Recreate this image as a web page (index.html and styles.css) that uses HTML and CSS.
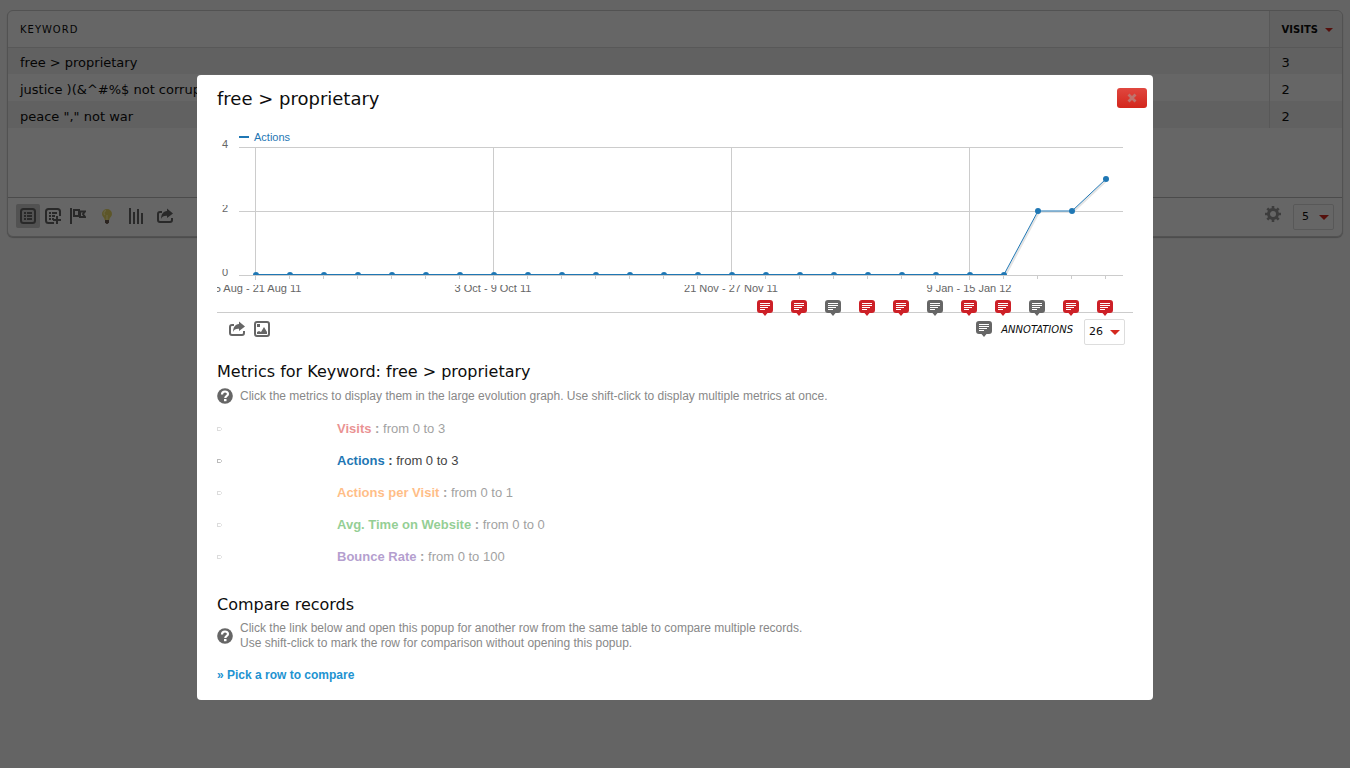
FILE: index.html
```
<!DOCTYPE html>
<html lang="en">
<head>
<meta charset="utf-8">
<title>Row evolution</title>
<link rel="stylesheet" href="styles.css">
</head>
<body>
<svg class="defs" aria-hidden="true">
  <symbol id="i-table" viewBox="0 0 16 16"><rect x="1" y="1" width="14" height="14" rx="2.500" fill="none" stroke="currentColor" stroke-width="2"/><path d="M4 4h2v2H4zM4 7h2v2H4zM4 10h2v2H4zM7 4h5v2H7zM7 7h5v2H7zM7 10h5v2H7z" fill="currentColor"/></symbol>
  <symbol id="i-tableplus" viewBox="0 0 16 16"><path d="M15 8V3.500Q15 1 12.500 1h-9Q1 1 1 3.500v9Q1 15 3.500 15H9" fill="none" stroke="currentColor" stroke-width="2"/><path d="M4 4h2v2H4zM4 7h2v2H4zM4 10h2v2H4zM7 4h5v2H7zM7 7h3v2H7zM7 10h2v2H7zM11 8h2v3h3v2h-3v3h-2v-3H8v-2h3z" fill="currentColor"/></symbol>
  <symbol id="i-flag" viewBox="0 0 16 16"><path d="M1 0v16M4 8V2h5v6zM9 3.500h6L13 6l2 3h-5V4" fill="none" stroke="currentColor" stroke-width="2"/></symbol>
  <symbol id="i-bulb" viewBox="0 0 16 16"><path d="M8 1a5 5 0 0 0-5 5c0 2.500 2.500 3.500 2.700 6h4.600c.2-2.500 2.700-3.500 2.700-6a5 5 0 0 0-5-5z" fill="#e8d868"/><path d="M7 2.500C4.500 3 4.500 6 6 7M8 7v5" stroke="#fff6a0" stroke-width="1.300" fill="none"/><path d="M6 12h4v2.500L8.500 16h-1L6 14.500z" fill="#6b5a50"/></symbol>
  <symbol id="i-bars" viewBox="0 0 16 16"><path d="M2 0v16M6 4v12M10 1v15M14 5v11" fill="none" stroke="currentColor" stroke-width="2"/></symbol>
  <symbol id="i-share" viewBox="0 0 16 16"><path d="M5 4H3Q1 4 1 6v6Q1 14 3 14h10q2 0 2-2v-2" fill="none" stroke="currentColor" stroke-width="2"/><path d="M10 0.500 16 5.500 10 10V7.700C7 7.500 5 8.500 4 11c0-4.500 2-7.500 6-8z" fill="currentColor"/></symbol>
  <symbol id="i-image" viewBox="0 0 16 16"><rect x="1" y="1" width="14" height="14" rx="2" fill="none" stroke="currentColor" stroke-width="2"/><path d="M3 13v-2l2-1 2 1 3-5 3 5v2zM3 3h3v3H3z" fill="currentColor"/></symbol>
  <symbol id="i-gear" viewBox="0 0 16 16"><circle cx="8" cy="8" r="4.500" fill="none" stroke="currentColor" stroke-width="3"/><path d="M8 0v3M8 13v3M0 8h3M13 8h3M2.300 2.300l2.200 2.200M11.500 11.500l2.200 2.200M2.300 13.700l2.200-2.200M11.500 4.500l2.200-2.200" stroke="currentColor" stroke-width="2.600"/></symbol>
  <symbol id="i-note" viewBox="0 0 16 16"><path d="M3 0h10q3 0 3 3v7q0 3-3 3h-2.500L8 16l-2.500-3H3q-3 0-3-3V3q0-3 3-3z" fill="currentColor"/><path d="M3 3.500h10M3 5.500h10M3 7.500h8M3 9.500h5" stroke="#fff"/></symbol>
  <symbol id="i-help" viewBox="0 0 16 16"><circle cx="8" cy="8" r="7.800" fill="currentColor"/><path d="M5 6.500c0-4 6-3.800 6-.5 0 2-2.700 1.700-2.700 4" fill="none" stroke="#fff" stroke-width="2.200"/><path d="M7 11h2.500v2.200H7z" fill="#fff"/></symbol>
  <symbol id="i-bullet" viewBox="0 0 5 6"><path d="M0 1.500h3.500l1 1v1l-1 1H0M.5 1v4" fill="none" stroke="#bbb"/></symbol>
</svg>

<main class="widget">
  <table class="records">
    <thead><tr><th>KEYWORD</th><th class="sorted">VISITS <span class="caret"></span></th></tr></thead>
    <tbody>
      <tr><td>free &gt; proprietary</td><td>3</td></tr>
      <tr><td>justice )(&amp;^#%$ not corruption</td><td>2</td></tr>
      <tr><td>peace "," not war</td><td>2</td></tr>
    </tbody>
  </table>
  <footer class="toolbar">
    <button class="tool active" aria-label="Table"><svg><use href="#i-table"/></svg></button>
    <button class="tool" aria-label="Table with more metrics"><svg><use href="#i-tableplus"/></svg></button>
    <button class="tool" aria-label="Goals"><svg><use href="#i-flag"/></svg></button>
    <button class="tool wide" aria-label="Insights"><svg><use href="#i-bulb"/></svg></button>
    <button class="tool" aria-label="Bar graph"><svg><use href="#i-bars"/></svg></button>
    <button class="tool wide" aria-label="Export"><svg><use href="#i-share"/></svg></button>
    <button class="tool settings" aria-label="Settings"><svg><use href="#i-gear"/></svg></button>
    <label class="picker"><select aria-label="Rows"><option>5</option><option>10</option></select><span class="caret"></span></label>
  </footer>
</main>

<div class="overlay">
  <section class="dialog" role="dialog" aria-labelledby="dialog-title">
    <header class="dialog-head">
      <h1 id="dialog-title">free &gt; proprietary</h1>
      <button class="close" aria-label="Close"><svg viewBox="0 0 10 10"><path d="M1.500 1.500l7 7M8.500 1.500l-7 7" stroke="#bf746e" stroke-width="2.800"/></svg></button>
    </header>

    <svg class="chart" viewBox="0 0 916 192" role="img" aria-label="Evolution of actions">
      <defs>
        <clipPath id="c-x"><rect x="0" y="161" width="916" height="14"/></clipPath>
        <clipPath id="c-y"><rect x="0" y="0" width="20" height="24"/><rect x="0" y="81" width="20" height="12"/><rect x="0" y="145" width="20" height="12"/></clipPath>
        <clipPath id="c-p"><rect x="22" y="20" width="894" height="131"/></clipPath>
      </defs>
      <path class="grid" d="M22 23.500h884M22 87.500h884M22 151.500h884M38.500 23v133M276.500 23v133M514.500 23v133M752.500 23v133"/>
      <path class="grid" id="ticks"/>
      <path class="grid" d="M0 188.500h916"/>
      <path d="M22 13h10" stroke="#1f77b4" stroke-width="2"/>
      <text class="legend" x="37" y="17">Actions</text>
      <g class="axis" clip-path="url(#c-y)"><text x="5" y="24">4</text><text x="5" y="88">2</text><text x="5" y="152">0</text></g>
      <g class="axis mid" clip-path="url(#c-x)"><text x="38" y="168">15 Aug - 21 Aug 11</text><text x="276" y="168">3 Oct - 9 Oct 11</text><text x="514" y="168">21 Nov - 27 Nov 11</text><text x="752" y="168">9 Jan - 15 Jan 12</text></g>
      <g clip-path="url(#c-p)">
        <path class="shade" d="M788 152l34-64h34l34-32"/>
        <path class="line" d="M39 150.500H787L821 87H855L889 55"/>
        <g id="points" fill="#1f77b4"></g>
      </g>
      <g id="notes"></g>
    </svg>

    <div class="chart-foot">
      <button class="tool" aria-label="Export"><svg><use href="#i-share"/></svg></button>
      <button class="tool" aria-label="Export as image"><svg><use href="#i-image"/></svg></button>
      <a class="annotations" href="#"><svg><use href="#i-note"/></svg>ANNOTATIONS</a>
      <label class="picker periods"><select aria-label="Periods"><option>26</option><option>52</option></select><span class="caret"></span></label>
    </div>

    <h2>Metrics for Keyword: free &gt; proprietary</h2>
    <p class="help"><svg><use href="#i-help"/></svg><span>Click the metrics to display them in the large evolution graph. Use shift-click to display multiple metrics at once.</span></p>
    <ul class="metrics">
      <li><svg><use href="#i-bullet"/></svg><span><b class="visits">Visits</b><b> : </b>from 0 to 3</span></li>
      <li class="current"><svg><use href="#i-bullet"/></svg><span><b class="actions">Actions</b><b> : </b>from 0 to 3</span></li>
      <li><svg><use href="#i-bullet"/></svg><span><b class="per-visit">Actions per Visit</b><b> : </b>from 0 to 1</span></li>
      <li><svg><use href="#i-bullet"/></svg><span><b class="time">Avg. Time on Website</b><b> : </b>from 0 to 0</span></li>
      <li><svg><use href="#i-bullet"/></svg><span><b class="bounce">Bounce Rate</b><b> : </b>from 0 to 100</span></li>
    </ul>

    <h2>Compare records</h2>
    <p class="help"><svg><use href="#i-help"/></svg><span>Click the link below and open this popup for another row from the same table to compare multiple records.<br>Use shift-click to mark the row for comparison without opening this popup.</span></p>
    <a class="pick" href="#">» Pick a row to compare</a>
  </section>
</div>
<script src="chart.js"></script>
</body>
</html>
```
FILE: styles.css
```
* { box-sizing: border-box; }
body { margin: 0; min-height: 100vh; padding: 10px 7px; background: #fafafa; font-family: "DejaVu Sans", Verdana, sans-serif; color: #0d0d0d; }
button { border: 0; padding: 0; background: none; color: inherit; font: inherit; }
h1, h2, p, ul { margin: 0; padding: 0; }
.defs { display: none; }

.widget { border: 1px solid #ccc; border-radius: 6px; background: #fff; box-shadow: 0 1px 1px #bbb; }
.records { width: 100%; border-collapse: collapse; margin-bottom: 69px; }
.records th { height: 36px; padding: 2px 12px 0; text-align: left; font-size: 10px; font-weight: 400; letter-spacing: 1px; border-bottom: 1px solid #ddd; white-space: nowrap; }
.records .sorted { width: 73px; padding-right: 8px; font-weight: 700; letter-spacing: 0; background: #f2f2f2; border-radius: 0 6px 0 0; }
.records .caret { margin-left: 4px; }
.records td { height: 27px; padding: 3px 12px 0; font-size: 13px; }
.records td + td, .records th + th { border-left: 1px solid #ddd; }
.records tbody tr:nth-child(odd) { background: #f2f2f2; }

.toolbar { display: flex; align-items: flex-start; gap: 1px; height: 39px; padding: 6px 8px; border-top: 1px solid #bbb; }
.tool { width: 24px; height: 24px; display: grid; place-items: center; color: #666; }
.tool svg { width: 16px; height: 16px; }
.tool.active { background: #ccc; border-radius: 2px; }
.tool.wide { width: 32px; }
.settings { margin-left: auto; margin-right: 7px; height: 20px; color: #999; }
.caret { display: inline-block; border: 4px solid transparent; border-top-color: #d4291f; border-bottom: 0; vertical-align: middle; }
.picker { display: flex; align-items: center; position: relative; border: 1px solid #ddd; border-radius: 2px; width: 41px; height: 26px; }
.picker select { appearance: none; width: 100%; height: 100%; border: 0; background: none; padding: 0 0 2px 8px; font: 11px "DejaVu Sans", sans-serif; color: #0d0d0d; }
.picker.periods select { padding-left: 4px; }
.picker .caret { position: absolute; right: 4px; border-width: 5px 5px 0; pointer-events: none; }

.overlay { position: fixed; inset: 0; padding: 75px 20px 20px; overflow: auto; background: rgba(0, 0, 0, .6); }
.dialog { max-width: 956px; margin: 0 auto; padding: 12px 20px 17px; border-radius: 4px; background: #fff; font-size: 12px; }
.dialog-head { display: flex; justify-content: space-between; align-items: flex-start; height: 37px; margin-right: -14px; }
.dialog-head h1 { font-size: 18px; line-height: 24px; font-weight: 400; }
.close { width: 30px; height: 20px; margin-top: 1px; border-radius: 3px; background: linear-gradient(#e0473f, #d3261c); display: grid; place-items: center; }
.close svg { width: 10px; height: 10px; }

.chart { display: block; width: 100%; overflow: visible; }
.grid { stroke: #ccc; fill: none; }
.line { stroke: #1f77b4; fill: none; }
.shade { stroke: #e4e4e4; stroke-width: 2; fill: none; }
.legend { font: 11px "Liberation Sans", Arial, sans-serif; fill: #1f77b4; }
.axis { font: 11px "Liberation Sans", Arial, sans-serif; fill: #666; }
.mid { text-anchor: middle; }

.chart-foot { display: flex; align-items: flex-start; height: 46px; padding: 1px 8px 0; gap: 1px; }
.annotations { display: flex; align-items: center; gap: 9px; height: 24px; margin: 0 10px 0 auto; font-size: 10px; font-style: italic; color: #0d0d0d; text-decoration: none; }
.annotations svg { width: 16px; height: 16px; color: #666; }
.periods { margin-top: 2px; }

h2 { font-size: 16px; line-height: 20px; font-weight: 400; }
.help { display: flex; align-items: center; gap: 7px; margin-top: 6px; font: 12px/15px "Liberation Sans", Arial, sans-serif; color: #888; }
.help svg { width: 16px; height: 16px; color: #666; }
.metrics { list-style: none; margin: 9px 0 22px; font: 13px/32px "Liberation Sans", Arial, sans-serif; color: #444; }
.metrics li { display: flex; align-items: center; gap: 115px; height: 32px; opacity: .5; }
.metrics li.current { opacity: 1; }
.metrics svg { width: 5px; height: 6px; }
.visits { color: #d62728; }
.actions { color: #1f77b4; }
.per-visit { color: #ff7f0e; }
.time { color: #2ca02c; }
.bounce { color: #6b3fa0; }
.pick { display: inline-block; margin-top: 16px; font: bold 12px/16px "Liberation Sans", Arial, sans-serif; color: #1e93d1; text-decoration: none; }
```
FILE: chart.js
```
const step = 34, first = 39;
const values = Array(23).fill(0).concat([2, 2, 3]);
document.getElementById('points').innerHTML = values
  .map((v, i) => `<circle cx="${first + i * step}" cy="${151 - v * 32}" r="3"/>`).join('');
document.getElementById('ticks').setAttribute('d', values
  .map((v, i) => `M${first + i * step - 0.5} 152v3`).join(''));
const starred = [1, 1, 0, 1, 1, 0, 1, 1, 0, 1, 1];
document.getElementById('notes').innerHTML = starred
  .map((s, i) => `<use href="#i-note" x="${540 + i * step}" y="176" width="16" height="16" color="${s ? '#cd2027' : '#666'}"/>`).join('');
```
